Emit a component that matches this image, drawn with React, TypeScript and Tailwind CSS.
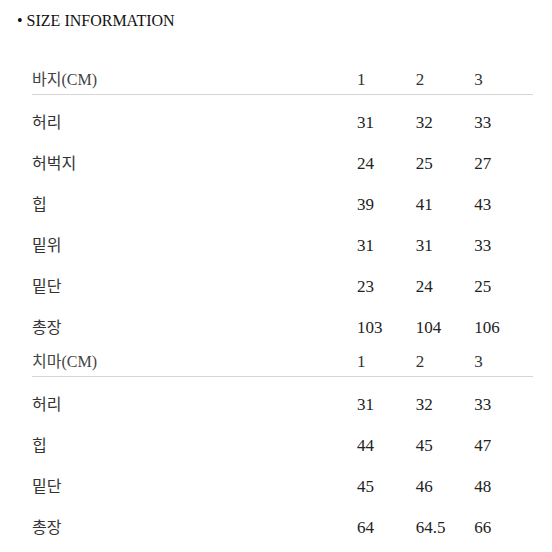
import React from "react";

const font = { fontFamily: '"Liberation Serif", "Noto Sans CJK KR", serif' };

type Row = [string, string, string, string];

const pants: Row[] = [
  ["허리", "31", "32", "33"],
  ["허벅지", "24", "25", "27"],
  ["힙", "39", "41", "43"],
  ["밑위", "31", "31", "33"],
  ["밑단", "23", "24", "25"],
  ["총장", "103", "104", "106"],
];

const skirt: Row[] = [
  ["허리", "31", "32", "33"],
  ["힙", "44", "45", "47"],
  ["밑단", "45", "46", "48"],
  ["총장", "64", "64.5", "66"],
];

function Section({ title, rows }: { title: string; rows: Row[] }) {
  return (
    <div>
      <div className="grid grid-cols-[325px_1fr_1fr_1fr] border-b border-[#d6d6d6] pt-[11px] pb-[4px] h-[36px] leading-[20px] text-[17px] text-[#333]">
        <div className="text-[16px] text-[#444]">{title}</div>
        <div>1</div>
        <div>2</div>
        <div>3</div>
      </div>
      {rows.map((r, i) => (
        <div
          key={i}
          className="grid grid-cols-[325px_1fr_1fr_1fr] h-[41px] pt-[18px] leading-[20px] text-[17px] text-[#222]"
        >
          <div className="text-[16px] text-[#333]">{r[0]}</div>
          <div>{r[1]}</div>
          <div>{r[2]}</div>
          <div>{r[3]}</div>
        </div>
      ))}
    </div>
  );
}

export default function App() {
  return (
    <div className="w-[552px] h-[552px] bg-white overflow-hidden" style={font}>
      <div className="pl-[17px] pt-[11px] h-[59px] text-[16px] leading-[20px] text-[#111]">
        <span className="mr-[4px]">•</span>SIZE INFORMATION
      </div>
      <div className="ml-[32px] w-[501px]">
        <Section title="바지(CM)" rows={pants} />
        <Section title="치마(CM)" rows={skirt} />
      </div>
    </div>
  );
}
